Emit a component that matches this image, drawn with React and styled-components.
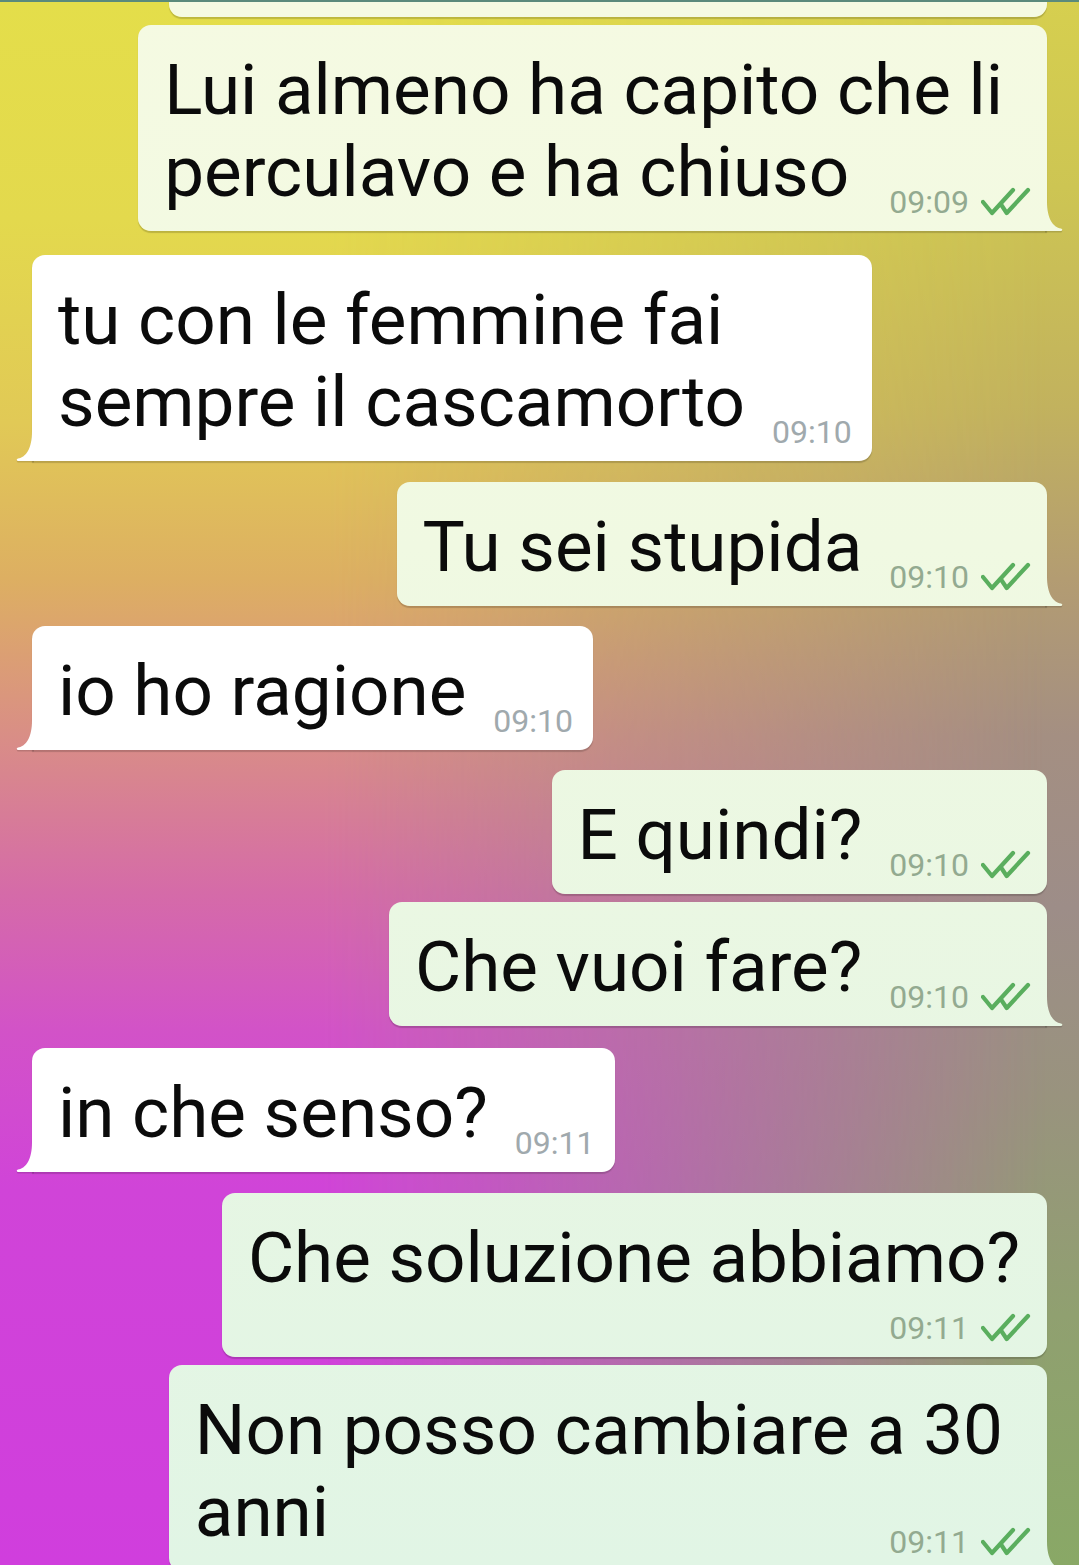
import React from 'react';
import styled, { createGlobalStyle, css } from 'styled-components';

const GlobalStyle = createGlobalStyle`
  html, body { margin: 0; padding: 0; }
  body {
    width: 1079px;
    height: 1565px;
    overflow: hidden;
    font-family: Roboto, "Noto Sans", "Liberation Sans", sans-serif;
  }
`;

const OUT_BG = 'linear-gradient(180deg, #f5fae2 0%, #f0f9e2 35%, #e7f6e3 70%, #e1f5e5 100%)';
const OUT_TAIL = "path('M0 0 L2 0 C2 18 8 26 16 27.6 Q18 28.3 17 29.5 Q16.3 30 15 30 L0 30 Z')";
const IN_TAIL = "path('M18 0 L16 0 C16 18 10 26 2 27.6 Q0 28.3 1 29.5 Q1.7 30 3 30 L18 30 Z')";

const Screen = styled.div`
  position: relative;
  isolation: isolate;
  width: 1079px;
  height: 1565px;
  overflow: hidden;
  background: linear-gradient(
    180deg,
    #d6cf4f 0%,
    #cdc553 12%,
    #c2b25e 26%,
    #b39c72 37%,
    #a48f82 47%,
    #9d8d88 58%,
    #99937e 70%,
    #90a070 84%,
    #89a866 100%
  );
  &::before {
    content: '';
    position: absolute;
    inset: 0;
    z-index: -1;
    background: linear-gradient(
      180deg,
      #e4de4a 0%,
      #e3d94d 14%,
      #e1c956 27%,
      #ddaf62 37%,
      #d98e86 47%,
      #d56ba8 57%,
      #d252c8 66%,
      #d044d8 76%,
      #d03edd 100%
    );
    -webkit-mask-image: linear-gradient(90deg, #000 0%, #000 30%, transparent 97%);
    mask-image: linear-gradient(90deg, #000 0%, #000 30%, transparent 97%);
  }
`;

const TopBar = styled.div`
  position: relative;
  z-index: 2;
  height: 2px;
  background: #5b8a7b;
`;

const Chat = styled.div`
  display: flex;
  flex-direction: column;
  padding: 0 32px;
`;

const Bubble = styled.div`
  position: relative;
  align-self: ${p => (p.$out ? 'flex-end' : 'flex-start')};
  display: flex;
  flex-direction: column;
  margin-top: ${p => p.$gap}px;
  padding: 24px ${p => (p.$out ? 16 : 20)}px 18px 26px;
  border-radius: 13px;
  box-shadow: 0 1.5px 1px rgba(0, 0, 0, 0.17);
  ${p =>
    p.$out
      ? css`
          background: ${OUT_BG};
          background-attachment: fixed;
        `
      : css`
          background: #ffffff;
        `}
  ${p => p.$partial && css`
    width: ${p.$width}px;
    box-sizing: border-box;
    height: 60px;
  `}
  ${p =>
    p.$tail &&
    css`
      ${p.$out ? 'border-bottom-right-radius: 0;' : 'border-bottom-left-radius: 0;'}
      &::after,
      &::before {
        content: '';
        position: absolute;
        width: 18px;
        height: 30px;
        ${p.$out ? 'right: -16px;' : 'left: -16px;'}
        clip-path: ${p.$out ? OUT_TAIL : IN_TAIL};
      }
      &::after {
        bottom: 0;
        background: inherit;
      }
      &::before {
        bottom: -1.5px;
        z-index: -1;
        background: rgba(0, 0, 0, 0.14);
      }
    `}
`;

const Line = styled.div`
  font-size: 71px;
  line-height: 82px;
  color: #0b0b0b;
  white-space: nowrap;
  padding-right: ${p => p.$pad || 0}px;
`;

const LastRow = styled.div`
  display: flex;
  align-items: flex-end;
  justify-content: space-between;
  gap: 27px;
`;

const MetaRow = styled.div`
  display: flex;
  justify-content: flex-end;
  align-items: flex-end;
  height: 40px;
`;

const Meta = styled.div`
  display: flex;
  align-items: flex-end;
  gap: 12px;
  flex-shrink: 0;
`;

const Time = styled.span`
  font-size: 32px;
  line-height: 32px;
  margin-bottom: -5px;
  color: ${p => (p.$out ? '#93aa90' : '#a0a9ad')};
  white-space: nowrap;
`;

const CheckIcon = styled.svg`
  display: block;
  margin-bottom: -4px;
`;

const Checks = () => (
  <CheckIcon width="50" height="30" viewBox="0 0 50 30" fill="none">
    <path d="M2 15 L11 26 L32 3" stroke="#5aae5e" strokeWidth="4.2" strokeLinecap="round" strokeLinejoin="round" />
    <path d="M20.7 18.5 L25.7 26 L47 3" stroke="#5aae5e" strokeWidth="4.2" strokeLinecap="round" strokeLinejoin="round" />
  </CheckIcon>
);

const messages = [
  { out: true, lines: ['Lui almeno ha capito che li', 'perculavo e ha chiuso'], time: '09:09', tail: true, gap: 8, textPad: 28 },
  { out: false, lines: ['tu con le femmine fai', 'sempre il cascamorto'], time: '09:10', tail: true, gap: 24, textPad: 24 },
  { out: true, lines: ['Tu sei stupida'], time: '09:10', tail: true, gap: 21 },
  { out: false, lines: ['io ho ragione'], time: '09:10', tail: true, gap: 20 },
  { out: true, lines: ['E quindi?'], time: '09:10', tail: false, gap: 20 },
  { out: true, lines: ['Che vuoi fare?'], time: '09:10', tail: true, gap: 8 },
  { out: false, lines: ['in che senso?'], time: '09:11', tail: true, gap: 22 },
  { out: true, lines: ['Che soluzione abbiamo?'], time: '09:11', tail: false, gap: 21, metaBelow: true, textPad: 11 },
  { out: true, lines: ['Non posso cambiare a 30', 'anni'], time: '09:11', tail: true, gap: 8, textPad: 28 },
];

const MessageMeta = ({ out, time }) => (
  <Meta>
    <Time $out={out}>{time}</Time>
    {out && <Checks />}
  </Meta>
);

const Message = ({ m }) => {
  const head = m.metaBelow ? m.lines : m.lines.slice(0, -1);
  const last = m.lines[m.lines.length - 1];
  return (
    <Bubble $out={m.out} $tail={m.tail} $gap={m.gap}>
      {head.map((l, i) => (
        <Line key={i} $pad={m.textPad}>{l}</Line>
      ))}
      {m.metaBelow ? (
        <MetaRow>
          <MessageMeta out={m.out} time={m.time} />
        </MetaRow>
      ) : (
        <LastRow>
          <Line>{last}</Line>
          <MessageMeta out={m.out} time={m.time} />
        </LastRow>
      )}
    </Bubble>
  );
};

export default function App() {
  return (
    <>
      <GlobalStyle />
      <Screen>
        <TopBar />
        <Chat>
          <Bubble $out $partial $width={878} $gap={-45} />
          {messages.map((m, i) => (
            <Message key={i} m={m} />
          ))}
        </Chat>
      </Screen>
    </>
  );
}
